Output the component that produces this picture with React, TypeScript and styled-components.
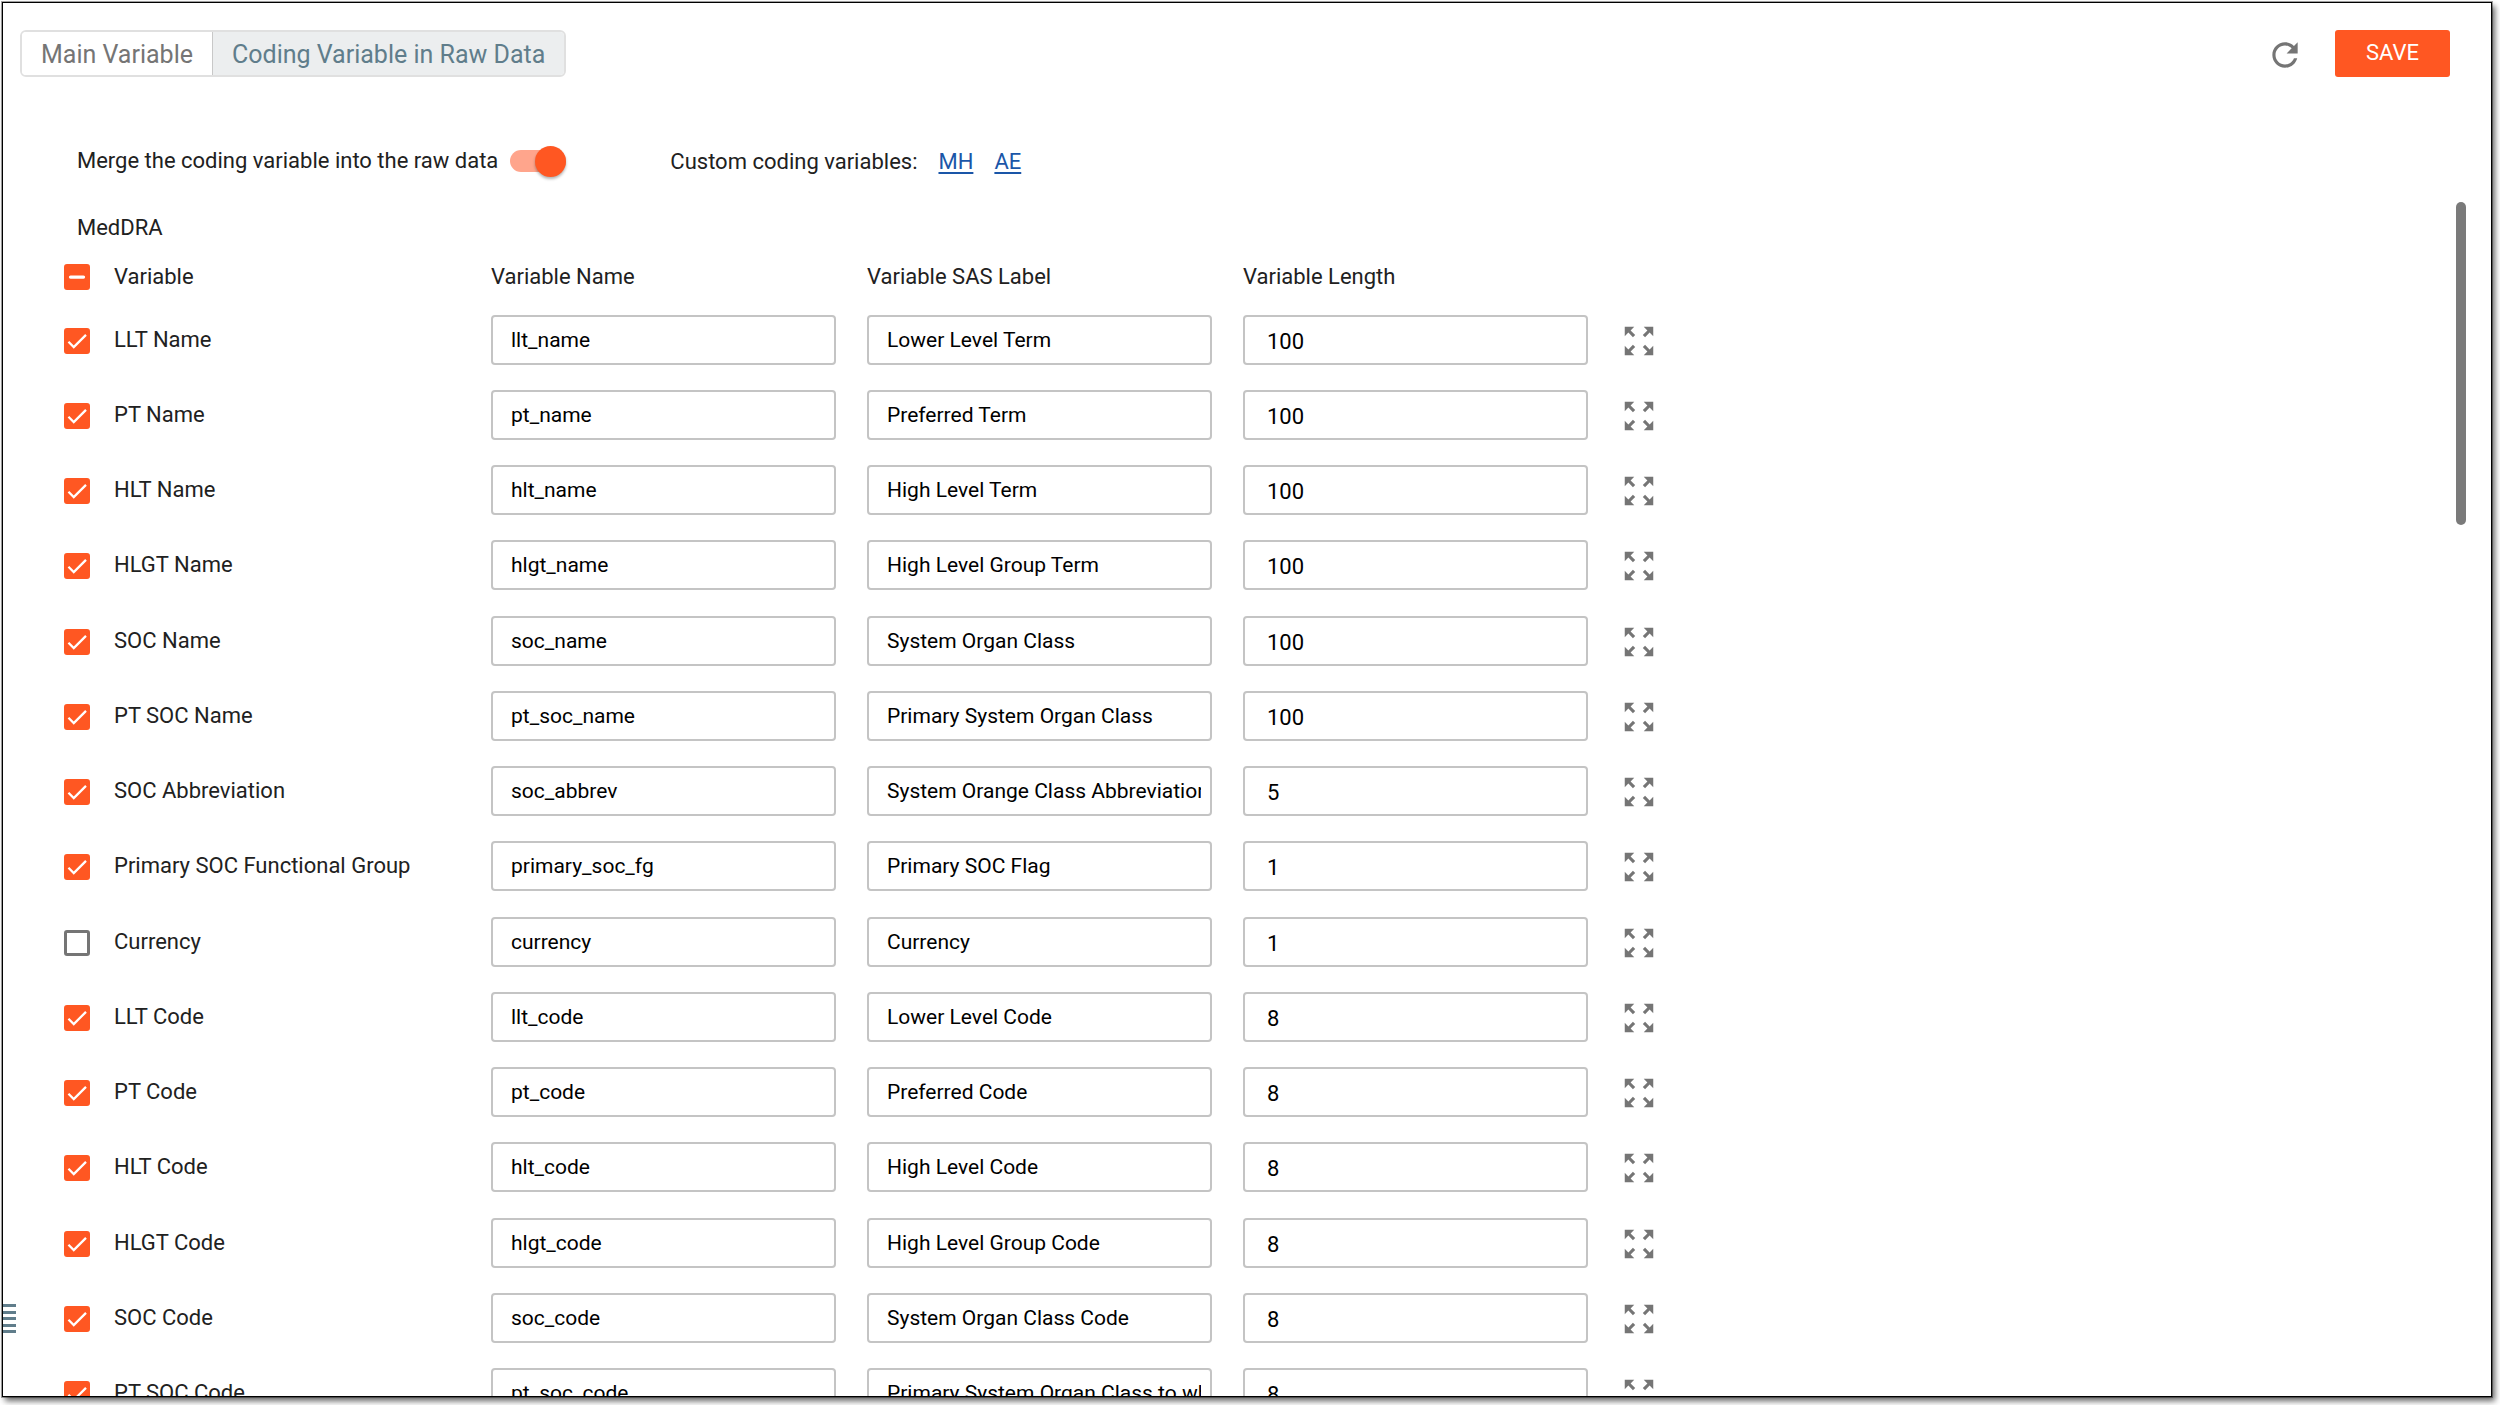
import React, { useState } from "react";
import styled, { createGlobalStyle } from "styled-components";

const ACCENT = "#ff5722";
const TEXT = "#212121";
const MUTED = "#757575";
const SLATE = "#607d8b";

const GlobalStyle = createGlobalStyle`
  *, *::before, *::after { box-sizing: border-box; }
  body {
    margin: 0;
    background: #fff;
    color: ${TEXT};
    font-family: Roboto, "Liberation Sans", sans-serif;
    font-size: 22px;
    line-height: 30px;
    overflow: hidden;
  }
  button, input { font: inherit; }
`;

const Page = styled.div`
  display: flex;
  height: 100vh;
  padding: 2px 8px 8px 2px;
`;

const Frame = styled.main`
  position: relative;
  display: flex;
  flex: 1;
  flex-direction: column;
  min-width: 0;
  overflow: hidden;
  border: 1px solid #000;
  box-shadow: 0 0 0 1px rgba(0, 0, 0, 0.35), 3px 4px 6px rgba(0, 0, 0, 0.6);
`;

const Toolbar = styled.header`
  display: flex;
  align-items: center;
  justify-content: space-between;
  padding: 27px 41px 0 17px;
`;

const Tabs = styled.div`
  display: flex;
  overflow: hidden;
  border: 2px solid #e0e0e0;
  border-radius: 6px;
`;

const Tab = styled.button<{ $active?: boolean }>`
  height: 43px;
  padding: 2px 19px 0;
  border: 0;
  background: ${(p) => (p.$active ? "#eceeef" : "#fff")};
  color: ${(p) => (p.$active ? SLATE : MUTED)};
  font-size: 25px;
  cursor: pointer;

  & + & { border-left: 1px solid #c8c8c8; }
`;

const Actions = styled.div`
  display: flex;
  align-items: center;
  gap: 31px;
`;

const IconButton = styled.button`
  display: flex;
  padding: 2px 0 0;
  border: 0;
  background: none;
  color: ${MUTED};
  cursor: pointer;

  svg { width: 38px; height: 38px; fill: currentColor; }
`;

const SaveButton = styled.button`
  width: 115px;
  height: 47px;
  padding: 0 0 2px;
  border: 0;
  border-radius: 3px;
  background: ${ACCENT};
  color: #fff;
  cursor: pointer;
`;

const Options = styled.section`
  display: flex;
  align-items: center;
  gap: 104px;
  height: 48px;
  margin: 60px 0 15px;
  padding-left: 74px;
`;

const SwitchLabel = styled.label`
  display: flex;
  align-items: center;
  gap: 12px;
`;

const Switch = styled.input`
  display: flex;
  align-items: center;
  width: 56px;
  height: 22px;
  margin: 0;
  appearance: none;
  border-radius: 11px;
  background: #bdbdbd;
  cursor: pointer;

  &::before {
    content: "";
    width: 31px;
    height: 31px;
    flex: none;
    border-radius: 50%;
    background: #fafafa;
    box-shadow: 0 2px 3px rgba(0, 0, 0, 0.3);
  }

  &:checked {
    justify-content: flex-end;
    background: #ffa58c;
  }

  &:checked::before { background: ${ACCENT}; }
`;

const Links = styled.nav`
  display: flex;
  gap: 21px;
  padding-top: 2px;
`;

const Link = styled.a`
  color: #1a56a8;
  text-underline-offset: 3px;
`;

const ScrollArea = styled.section`
  display: flex;
  flex: 1;
  justify-content: space-between;
  min-height: 0;
  padding: 2px 25px 0 61px;
`;

const Content = styled.div`
  flex: 1;
  padding-top: 5px;
`;

const GroupTitle = styled.h2`
  margin: 0;
  padding-left: 13px;
  font-size: inherit;
  font-weight: 400;
  line-height: 42px;
`;

const ScrollThumb = styled.div`
  width: 10px;
  height: 323px;
  border-radius: 5px;
  background: #7a7a7a;
`;

const Table = styled.table`
  width: 1596px;
  max-width: 100%;
  table-layout: fixed;
  border-collapse: collapse;

  th, td { padding: 0; text-align: left; font-weight: 400; }
  th { padding-top: 2px; }
  td:first-child { padding-top: 2px; }
  thead tr { height: 53px; }
  tbody tr { height: 75px; }
  tbody tr:nth-child(4n) { height: 76px; }
`;

const Col = styled.col<{ $width?: number }>`
  width: ${(p) => (p.$width ? `${p.$width}px` : "auto")};
`;

const CheckBox = styled.span`
  display: grid;
  width: 26px;
  height: 26px;

  > * { grid-area: 1 / 1; }

  input {
    width: 26px;
    height: 26px;
    margin: 0;
    appearance: none;
    border: 3px solid ${MUTED};
    border-radius: 3px;
    cursor: pointer;
  }

  input:checked, input:indeterminate {
    border-color: ${ACCENT};
    background: ${ACCENT};
  }

  svg {
    width: 26px;
    height: 26px;
    fill: none;
    stroke: #fff;
    stroke-width: 2.1;
    pointer-events: none;
  }
`;

const Field = styled.input`
  display: block;
  width: 345px;
  max-width: 100%;
  height: 50px;
  padding: 0 9px 0 18px;
  border: 2px solid #c4c4c4;
  border-radius: 4px;
  background: #fff;
  color: #000;
  font-size: 21px;
`;

const LengthField = styled(Field)`
  padding: 3px 9px 0 22px;
  font-size: 22px;
`;

const DrawerHandle = styled.button`
  position: absolute;
  left: 0;
  bottom: 63px;
  display: flex;
  flex-direction: column;
  justify-content: space-between;
  width: 13px;
  height: 29px;
  padding: 0;
  border: 0;
  background: none;
  cursor: pointer;
`;

const Bar = styled.span`
  width: 100%;
  height: 3px;
  background: ${SLATE};
`;

type Row = [label: string, name: string, sas: string, length: string, unchecked?: boolean];

const ROWS: Row[] = [
  ["LLT Name", "llt_name", "Lower Level Term", "100"],
  ["PT Name", "pt_name", "Preferred Term", "100"],
  ["HLT Name", "hlt_name", "High Level Term", "100"],
  ["HLGT Name", "hlgt_name", "High Level Group Term", "100"],
  ["SOC Name", "soc_name", "System Organ Class", "100"],
  ["PT SOC Name", "pt_soc_name", "Primary System Organ Class", "100"],
  ["SOC Abbreviation", "soc_abbrev", "System Orange Class Abbreviation", "5"],
  ["Primary SOC Functional Group", "primary_soc_fg", "Primary SOC Flag", "1"],
  ["Currency", "currency", "Currency", "1", true],
  ["LLT Code", "llt_code", "Lower Level Code", "8"],
  ["PT Code", "pt_code", "Preferred Code", "8"],
  ["HLT Code", "hlt_code", "High Level Code", "8"],
  ["HLGT Code", "hlgt_code", "High Level Group Code", "8"],
  ["SOC Code", "soc_code", "System Organ Class Code", "8"],
  ["PT SOC Code", "pt_soc_code", "Primary System Organ Class to which", "8"],
];

function VariableRow({ row, checked, onToggle }: { row: Row; checked: boolean; onToggle: () => void }) {
  const [label, name, sas, length] = row;
  return (
    <tr>
      <td>
        <CheckBox>
          <input type="checkbox" id={name} checked={checked} onChange={onToggle} />
          {checked && (
            <svg viewBox="0 0 24 24" aria-hidden="true">
              <path d="M4.1 12.7 9 17.6 20.3 6.3" />
            </svg>
          )}
        </CheckBox>
      </td>
      <td><label htmlFor={name}>{label}</label></td>
      <td><Field aria-label={`${label} variable name`} defaultValue={name} /></td>
      <td><Field aria-label={`${label} SAS label`} defaultValue={sas} /></td>
      <td><LengthField aria-label={`${label} length`} inputMode="numeric" defaultValue={length} /></td>
      <td>
        <IconButton aria-label={`Expand ${label}`}>
          <svg viewBox="0 0 24 24" aria-hidden="true">
            <path d="M15 3l2.3 2.3-2.89 2.87 1.42 1.42L18.7 6.7 21 9V3h-6zM3 9l2.3-2.3 2.87 2.89 1.42-1.42L6.7 5.3 9 3H3v6zm6 12l-2.3-2.3 2.89-2.87-1.42-1.42L5.3 17.3 3 15v6h6zm12-6l-2.3 2.3-2.87-2.89-1.42 1.42 2.89 2.87L15 21h6v-6z" />
          </svg>
        </IconButton>
      </td>
    </tr>
  );
}

export default function App() {
  const [checks, setChecks] = useState(() => ROWS.map((row) => !row[4]));
  const [merge, setMerge] = useState(true);
  const all = checks.every(Boolean);
  const some = checks.some(Boolean) && !all;
  const toggle = (index: number) => setChecks(checks.map((c, i) => (i === index ? !c : c)));

  return (
    <Page>
      <GlobalStyle />
      <Frame>
        <Toolbar>
          <Tabs>
            <Tab>Main Variable</Tab>
            <Tab $active>Coding Variable in Raw Data</Tab>
          </Tabs>
          <Actions>
            <IconButton aria-label="Refresh">
              <svg viewBox="0 0 24 24" aria-hidden="true">
                <path d="M17.65 6.35C16.2 4.9 14.21 4 12 4c-4.42 0-7.99 3.58-7.99 8s3.57 8 7.99 8c3.73 0 6.84-2.55 7.73-6h-2.08c-.82 2.33-3.04 4-5.65 4-3.31 0-6-2.69-6-6s2.69-6 6-6c1.66 0 3.14.69 4.22 1.78L13 11h7V4l-2.35 2.35z" />
              </svg>
            </IconButton>
            <SaveButton>SAVE</SaveButton>
          </Actions>
        </Toolbar>

        <Options>
          <SwitchLabel>
            Merge the coding variable into the raw data
            <Switch type="checkbox" role="switch" checked={merge} onChange={() => setMerge(!merge)} />
          </SwitchLabel>
          <Links>
            <span>Custom coding variables:</span>
            <Link href="#mh">MH</Link>
            <Link href="#ae">AE</Link>
          </Links>
        </Options>

        <ScrollArea>
          <Content>
            <GroupTitle>MedDRA</GroupTitle>
            <Table>
              <colgroup>
                <Col $width={50} />
                <Col $width={377} />
                <Col $width={376} />
                <Col $width={376} />
                <Col $width={377} />
                <Col />
              </colgroup>
              <thead>
                <tr>
                  <th>
                    <CheckBox>
                      <input
                        type="checkbox"
                        id="all-variables"
                        checked={all}
                        ref={(el) => { if (el) el.indeterminate = some; }}
                        onChange={() => setChecks(checks.map(() => !all))}
                      />
                      <svg viewBox="0 0 24 24" aria-hidden="true">
                        {some && <path d="M6 12h12" style={{ strokeWidth: 3, strokeLinecap: "round" }} />}
                        {all && <path d="M4.1 12.7 9 17.6 20.3 6.3" />}
                      </svg>
                    </CheckBox>
                  </th>
                  <th scope="col"><label htmlFor="all-variables">Variable</label></th>
                  <th scope="col">Variable Name</th>
                  <th scope="col">Variable SAS Label</th>
                  <th scope="col">Variable Length</th>
                  <th />
                </tr>
              </thead>
              <tbody>
                {ROWS.map((row, i) => (
                  <VariableRow key={row[1]} row={row} checked={checks[i]} onToggle={() => toggle(i)} />
                ))}
              </tbody>
            </Table>
          </Content>
          <ScrollThumb />
        </ScrollArea>

        <DrawerHandle aria-label="Open side panel">
          <Bar />
          <Bar />
          <Bar />
          <Bar />
          <Bar />
        </DrawerHandle>
      </Frame>
    </Page>
  );
}
